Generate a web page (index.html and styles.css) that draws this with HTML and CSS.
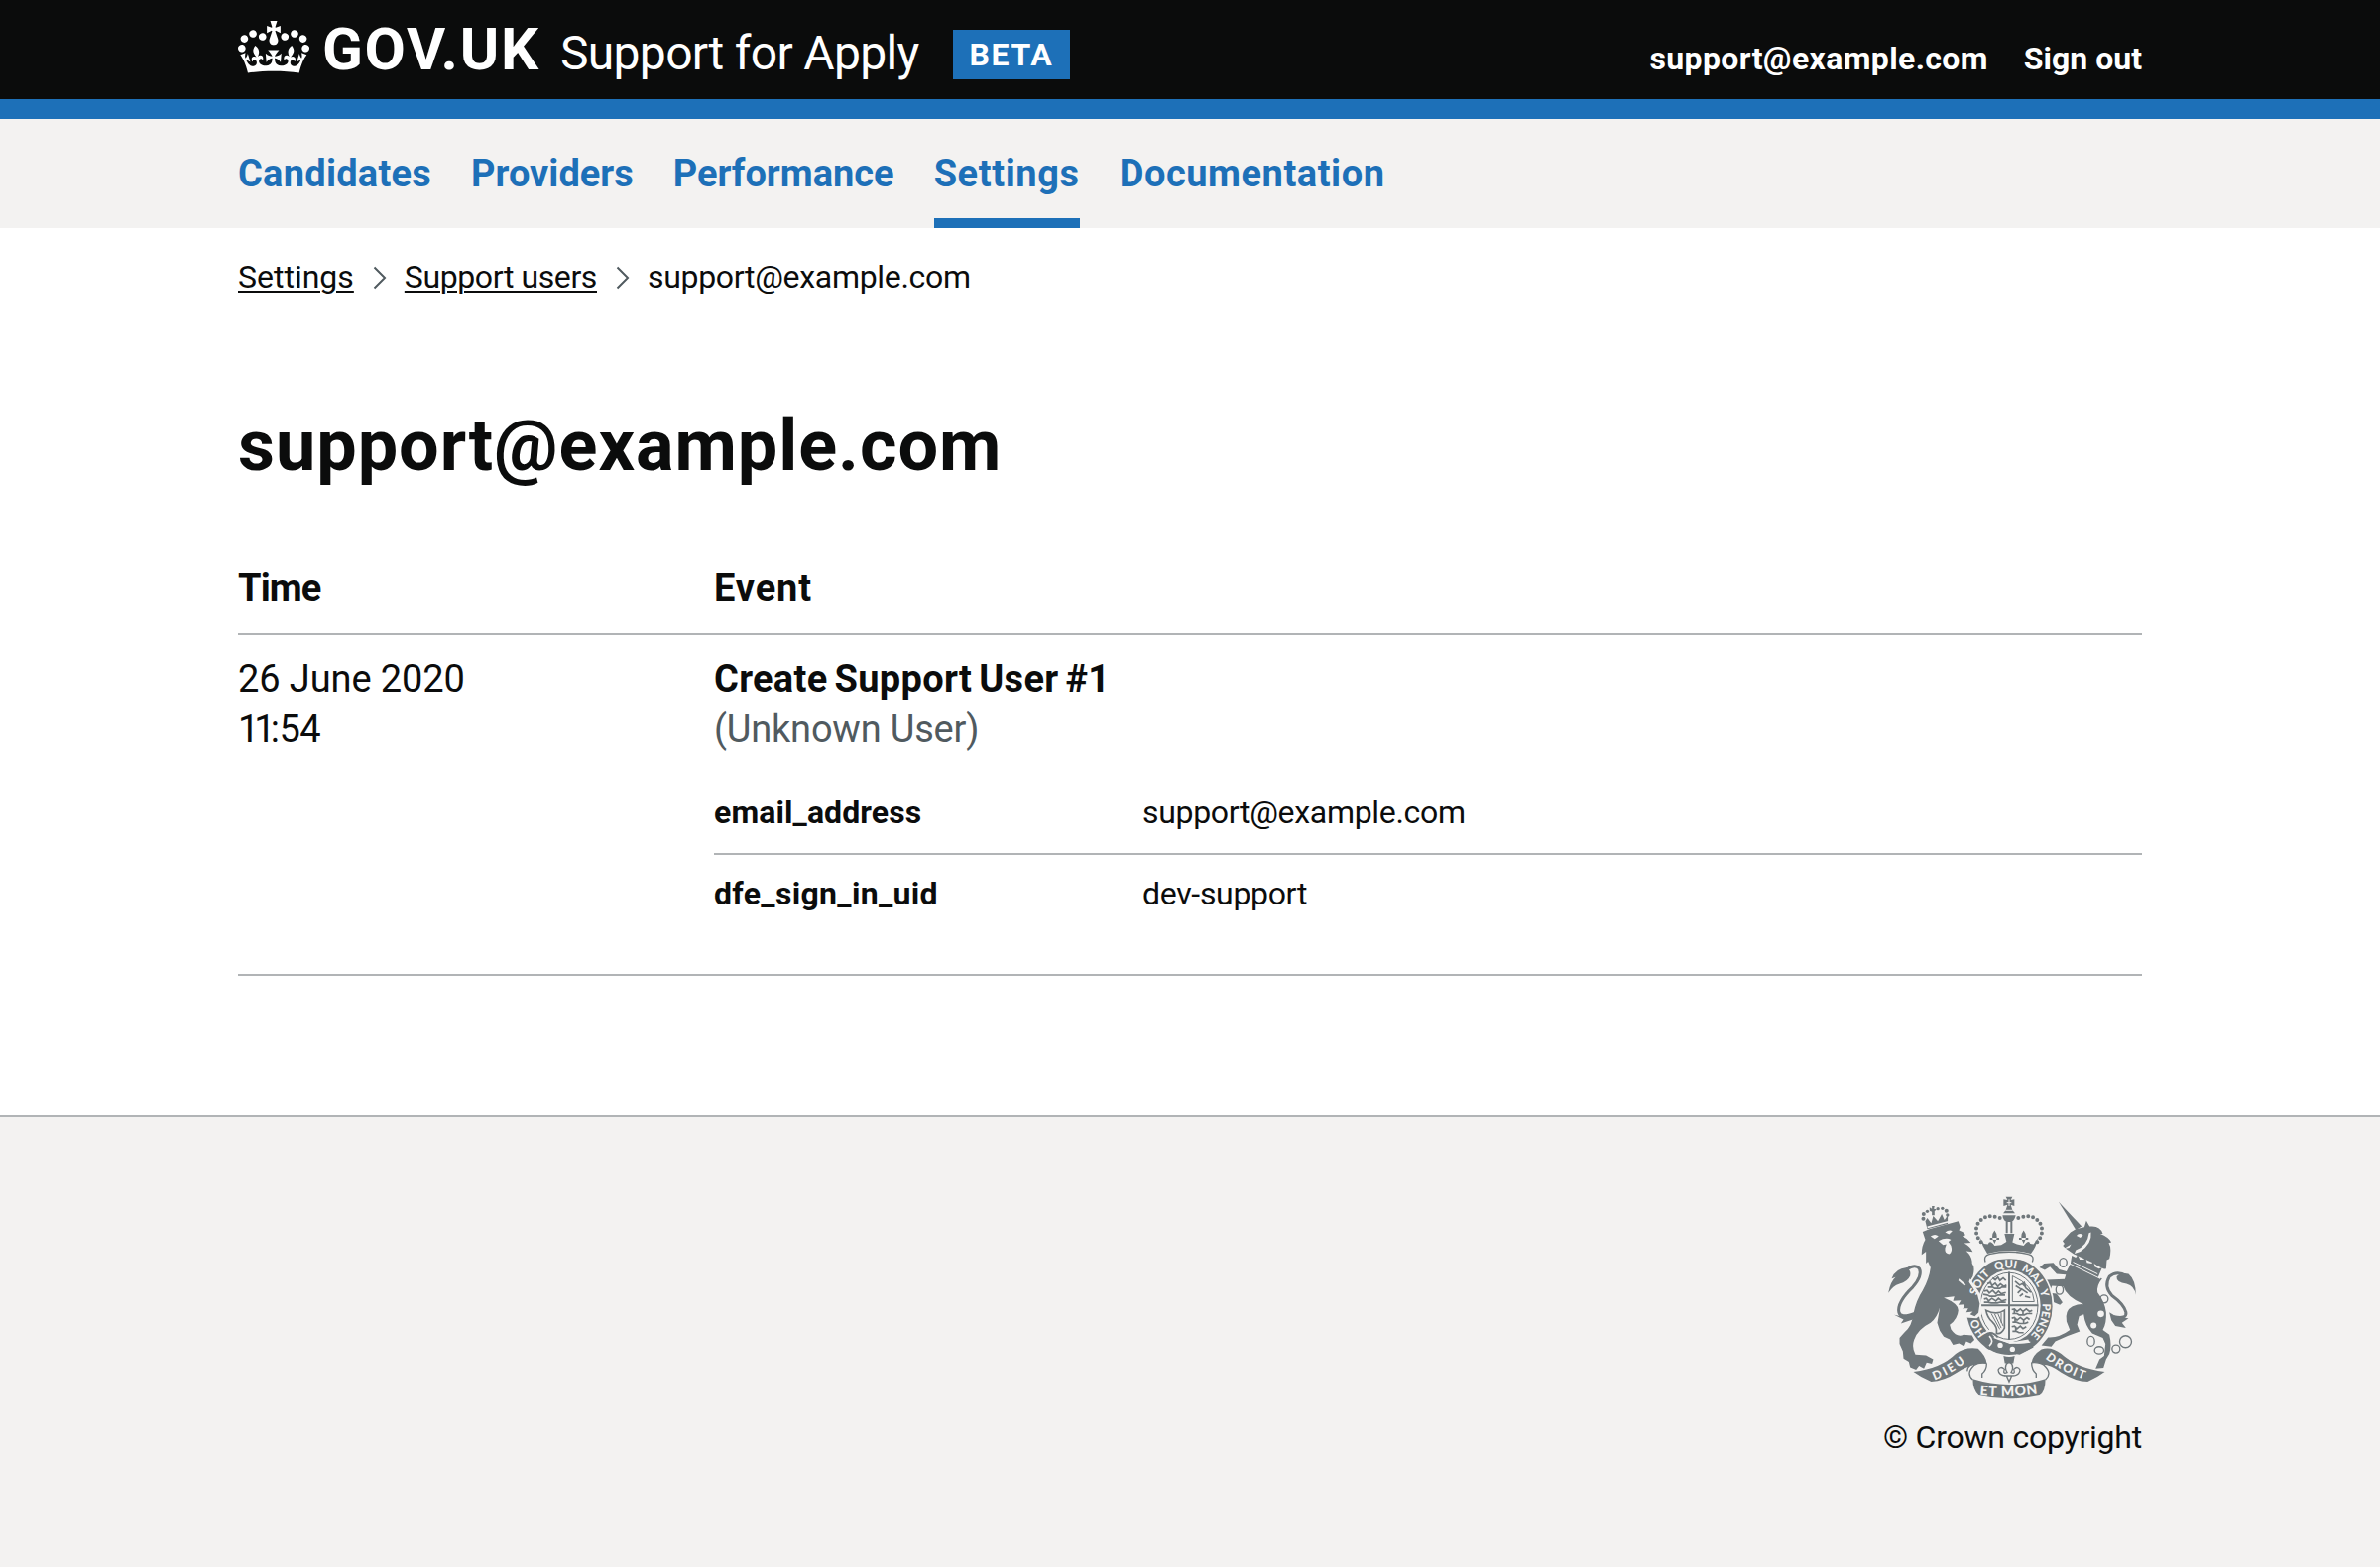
FILE: index.html
```html
<!DOCTYPE html>
<html lang="en">
<head>
<meta charset="utf-8">
<title>support@example.com - Support for Apply - GOV.UK</title>
<link rel="stylesheet" href="styles.css">
</head>
<body>
<header class="header">
  <div class="container header-inner">
    <svg class="crown" viewBox="0 0 132 97" aria-hidden="true"><path fill="#fff" d="M25 30.2c3.5 1.5 7.7-.2 9.1-3.7 1.5-3.6-.2-7.8-3.9-9.2-3.6-1.4-7.6.3-9.1 3.9-1.4 3.5.3 7.5 3.9 9zM9 39.5c3.6 1.5 7.8-.2 9.2-3.7 1.5-3.6-.2-7.8-3.9-9.1-3.6-1.5-7.6.2-9.1 3.8-1.4 3.5.3 7.5 3.8 9zM4.4 57.2c3.5 1.5 7.7-.2 9.1-3.8 1.5-3.6-.2-7.7-3.9-9.1-3.5-1.5-7.6.3-9.1 3.8-1.4 3.5.3 7.6 3.9 9.1zm38.3-21.4c3.5 1.5 7.7-.2 9.1-3.8 1.5-3.6-.2-7.7-3.9-9.1-3.6-1.5-7.6.3-9.1 3.8-1.3 3.6.4 7.7 3.9 9.1zm64.4-5.6c-3.6 1.5-7.8-.2-9.1-3.7-1.5-3.6.2-7.8 3.8-9.2 3.6-1.4 7.7.3 9.2 3.9 1.3 3.5-.4 7.5-3.9 9zm15.9 9.3c-3.6 1.5-7.7-.2-9.1-3.7-1.5-3.6.2-7.8 3.7-9.1 3.6-1.5 7.7.2 9.2 3.8 1.5 3.5-.3 7.5-3.8 9zm4.7 17.7c-3.6 1.5-7.8-.2-9.2-3.8-1.5-3.6.2-7.7 3.9-9.1 3.6-1.5 7.7.3 9.2 3.8 1.3 3.5-.4 7.6-3.9 9.1zM89.3 35.8c-3.6 1.5-7.8-.2-9.2-3.8-1.4-3.6.2-7.7 3.9-9.1 3.6-1.5 7.7.3 9.2 3.8 1.4 3.6-.3 7.7-3.9 9.1zM69.7 17.7l8.9 4.7V9.3l-8.9 2.8c-.2-.3-.5-.6-.9-.9L72.4 0H59.6l3.5 11.2c-.3.3-.6.5-.9.9l-8.8-2.8v13.1l8.8-4.7c.3.3.6.7.9.9l-5 15.4v.1c-.2.8-.4 1.6-.4 2.4 0 4.1 3.1 7.5 7 8.1h.2c.3 0 .7.1 1 .1.4 0 .7 0 1-.1h.2c4-.6 7.1-4.1 7.1-8.1 0-.8-.1-1.7-.4-2.4V34l-5.1-15.4c.4-.2.7-.6 1-.9zM66 92.8c16.9 0 32.8 1.1 47.1 3.2 4-16.9 8.9-26.7 14-33.5l-9.6-3.4c1 4.9 1.1 7.2 0 10.2-1.5-1.4-3-4.3-4.2-8.7L108.6 76c2.8-2 5-3.2 7.5-3.3-4.4 9.4-10 11.9-13.6 11.2-4.3-.8-6.3-4.6-5.6-7.9 1-4.7 5.7-5.9 8-.5 4.3-8.7-3-11.4-7.6-8.8 7.1-7.2 7.9-13.5 2.1-21.1-8 6.1-8.1 12.3-4.5 20.8-4.7-5.4-12.1-2.5-9.5 6.2 3.4-5.2 7.9-2 7.2 3.1-.6 4.3-6.4 7.8-13.5 7.2-10.3-.9-10.9-8-11.2-13.8 2.5-.5 7.1 1.8 11 7.3L80.2 60c-4.1 4.4-8 5.3-12.3 5.4 1.4-4.4 8-11.6 8-11.6H55.5s6.4 7.2 7.9 11.6c-4.2-.1-8-1-12.3-5.4l1.4 16.4c3.9-5.5 8.5-7.7 10.9-7.3-.3 5.8-.9 12.8-11.1 13.8-7.2.6-12.9-2.9-13.5-7.2-.7-5 3.8-8.3 7.1-3.1 2.7-8.7-4.6-11.6-9.4-6.2 3.7-8.5 3.6-14.7-4.6-20.8-5.8 7.6-5 13.9 2.2 21.1-4.7-2.6-11.9.1-7.7 8.8 2.3-5.5 7.1-4.2 8.1.5.7 3.3-1.3 7.1-5.7 7.9-3.5.7-9-1.8-13.5-11.2 2.5.1 4.7 1.3 7.5 3.3l-4.7-15.4c-1.2 4.4-2.7 7.2-4.3 8.7-1.1-3-.9-5.3 0-10.2l-9.5 3.4c5 6.9 9.9 16.7 14 33.5 14.8-2.1 30.8-3.2 47.7-3.2z"/></svg>
    <span class="logotype">GOV.UK</span>
    <span class="product">Support for Apply</span>
    <strong class="tag">BETA</strong>
    <nav class="account">
      <a class="account-email">support@example.com</a>
      <a class="account-out">Sign out</a>
    </nav>
  </div>
</header>
<nav class="primary">
  <div class="container primary-list">
    <a class="primary-link candidates">Candidates</a>
    <a class="primary-link">Providers</a>
    <a class="primary-link">Performance</a>
    <a class="primary-link current">Settings</a>
    <a class="primary-link documentation">Documentation</a>
  </div>
</nav>
<div class="container">
  <nav class="breadcrumbs">
    <a class="crumb">Settings</a>
    <svg class="chevron" viewBox="0 0 14 24"><path d="M1.5 1.5 12 12 1.5 22.5"/></svg>
    <a class="crumb crumb-users">Support users</a>
    <svg class="chevron" viewBox="0 0 14 24"><path d="M1.5 1.5 12 12 1.5 22.5"/></svg>
    <span class="email">support@example.com</span>
  </nav>
  <main>
    <h1 class="title">support@example.com</h1>
    <div class="row head">
      <div class="th-time">Time</div>
      <div class="th-event">Event</div>
    </div>
    <div class="row entry">
      <div class="time"><div class="date">26 June 2020</div><div class="clock"><span class="hour">11</span>:54</div></div>
      <div>
        <div class="event">Create Support User #1</div>
        <div class="user">(Unknown User)</div>
        <dl class="changes">
          <div class="change"><dt class="key-email">email_address</dt><dd class="email">support@example.com</dd></div>
          <div class="change"><dt class="key-uid">dfe_sign_in_uid</dt><dd class="email">dev-support</dd></div>
        </dl>
      </div>
    </div>
  </main>
</div>
<footer class="footer">
  <div class="container footer-inner">
    <svg class="crest" viewBox="72 46 750 616" aria-hidden="true">
      <defs>
        <path id="ho" d="M368 463A101 116 0 0 1 338 398"/>
        <path id="soit" d="M341 348A101 116 0 0 1 403 271"/>
        <path id="qui" d="M398 273A101 116 0 0 1 478 274"/>
        <path id="mal" d="M474 272A101 116 0 0 1 532 338"/>
        <path id="y" d="M530 333A101 116 0 0 1 539 374"/>
        <path id="pense" d="M539 372A101 116 0 0 1 480 484"/>
        <path id="dieu" d="M212 603Q270 582 325 534"/>
        <path id="droit" d="M547 537Q600 582 685 607"/>
        <path id="mon" d="M345 649Q437 660 545 642"/>
      </defs>
      <!-- lion -->
      <g class="ink">
        <path d="M176 154L196 146 284 122 290 140 286 150Q300 154 306 164L296 167Q312 174 322 187L302 189Q320 198 328 215L308 213Q326 228 326 250Q336 262 328 290L318 306 344 345 350 372 346 406 332 414 318 408 326 396 308 400 312 386 298 388 304 374 284 376 292 362 268 364 272 350 240 354Q284 372 284 392 282 418 258 436L262 450Q280 476 300 466L326 468 333 482 322 492 308 486 302 501 286 492 268 497 258 480 240 472 228 454 220 430 228 384Q220 414 200 430 160 450 150 482 142 505 154 526L186 528 208 540 204 554 188 550 180 568 165 560 156 572 138 564 134 548 118 538 116 516 106 494 106 476 120 460Q144 440 148 402 156 362 176 332 196 296 200 262L192 244 186 250 186 214 173 224Q172 198 184 178Z"/>
        <path d="M72 340Q78 306 94 292L82 296Q92 266 128 262 142 272 138 288 130 306 106 312 86 318 72 340Z"/>
        <path class="line" stroke-width="9" d="M128 268Q154 250 166 266 176 288 146 322 98 368 104 398 108 418 152 402"/>
        <path d="M90 406L118 412 156 398 146 420 110 432 118 420Z"/>
        <path d="M184 122L190 146 252 130 252 104 242 118 234 100 222 122 208 106 202 128 190 112Z"/>
        <circle cx="178" cy="114" r="6"/><circle cx="179" cy="100" r="6"/><circle cx="190" cy="92" r="5"/><circle cx="222" cy="84" r="5"/><circle cx="236" cy="83" r="5"/><circle cx="248" cy="90" r="6"/><circle cx="251" cy="103" r="5"/>
        <path d="M197 80L204 84 204 76 212 76 210 84 218 86 212 92 212 104 204 104 204 93 197 90Z"/>
      </g>
      <g class="paper">
        <path d="M190 138L262 119 263 123 191 143Z"/>
        <path d="M200 168Q214 158 224 168L212 176ZM244 156Q256 146 266 152L256 162Z"/>
        <path d="M224 182Q246 170 262 178L254 184 262 196Q268 216 256 222 242 220 244 204L248 192 238 194Z"/>
        <path d="M286 296L342 344 340 350 284 302Z"/>
      </g>
      <!-- unicorn -->
      <g class="ink">
        <path d="M588 63L658 138 640 148Z"/>
        <path d="M640 146L666 140 672 120 682 138Q714 134 722 160L714 160Q740 170 748 186L740 188Q750 204 742 236L734 240 732 266 722 268 692 248 634 222 608 204 601 196 606 190 600 182 624 156Z"/>
        <path d="M624 250L720 296Q702 318 706 338 728 366 732 398 734 430 722 452L742 466Q750 498 742 524L732 540 724 566 700 568 712 540 726 530 730 494 722 476 690 462Q668 438 664 404L650 410 644 436 652 456Q616 468 578 486L566 502 536 498 556 474Q590 476 622 452L612 426Q606 392 630 380 650 372 664 374 612 352 602 320L568 318 560 340 582 342 600 368 592 376 574 368 546 340 540 322 552 300 606 298 610 284 582 282 562 260 546 270 530 262 544 250 572 248 590 268 612 274Z"/>
        <path d="M822 346Q818 318 794 312 762 308 764 290 776 276 800 282 822 300 822 346Z"/>
        <path class="line" stroke-width="9" d="M794 288Q764 270 742 290 724 320 750 348 786 374 792 398 796 420 756 412"/>
        <path d="M742 398L764 412 800 416 780 430 792 446 760 440 748 422Z"/>
      </g>
      <g class="paper">
        <path d="M642 166Q650 156 662 164L654 172ZM686 156Q690 190 654 214L636 220 640 210Q676 196 680 158Z"/>
        <path d="M620 202L602 206 626 192Z"/>
        <path d="M626 220L732 270 714 298 618 250Z"/>
        <circle cx="716" cy="403" r="10"/><circle cx="694" cy="438" r="9"/>
      </g>
      <path class="ink" d="M628 226L640 232 646 224 652 238 664 238 670 232 674 248 688 250 694 244 698 260 710 266 720 262 708 292 624 250Z"/>
      <path class="cut" stroke-width="3" d="M632 246L706 282"/>
      <g class="line ring">
        <ellipse cx="602" cy="247" rx="11" ry="13"/><ellipse cx="591" cy="330" rx="11" ry="14"/><circle cx="726" cy="358" r="12"/><ellipse cx="686" cy="486" rx="11" ry="15"/><ellipse cx="711" cy="513" rx="14" ry="11"/><circle cx="762" cy="509" r="12"/><circle cx="791" cy="487" r="18"/>
      </g>
      <!-- shield and garter -->
      <ellipse class="paper" cx="438" cy="380" rx="136" ry="152"/>
      <ellipse class="ink" cx="438" cy="380" rx="131" ry="147"/>
      <ellipse class="paper" cx="438" cy="379" rx="95" ry="109"/>
      <ellipse class="line" stroke-width="3" cx="438" cy="379" rx="87" ry="101"/>
      <path class="line" stroke-width="6" d="M438 276V482M350 377H526"/>
      <g class="line" stroke-width="5">
        <path d="M388 294l8 6 8-8 6 10 10-8 8 8M372 312l10-4 4 10 10-8 8 10 8-8 10 8 8-4M374 322h14l6 4h16l6-4h14M362 334l10-2 6 8 10-8 10 10 8-8 8 8 14-4M360 344l12 2 8 4h16l8-4h22M362 358l8-2 6 8 10-8 12 8 8-8 10 8 14-4M362 368h12l10 2h18l8-2h18"/>
        <path d="M446 390l8-2 8 8 10-8 8 8 10-8 10 8 8-4M448 402h14l6 4h16l8-4h16M446 416l8-2 8 8 10-8 10 8 10-8 8 6M448 428h12l10 4h16l10-4M446 442l8-2 8 8 10-8 8 8 10-6M448 456h12l8 4h14M454 388v14M480 396v12M456 416v12M482 424v8M458 442v12"/>
        <path d="M456 304l14 12 14-8 4 16 16 14M464 340l12-12 18 12M458 318l16 10M486 350l16 4M478 312l8 8M470 350l10-8"/>
      </g>
      <path class="line" stroke-width="3" d="M448 288V366H514Q512 316 448 288Z"/>
      <path class="line" stroke-width="5" d="M368 392Q400 408 424 392L424 446Q414 466 400 462 404 444 386 426 372 414 368 392Z"/>
      <path class="line" stroke-width="3" d="M384 402L410 450M394 403L414 446M404 402L420 440M414 400V430"/>
      <!-- lion's paw over the garter -->
      <path class="paper" d="M320 296L352 346 356 404 340 416 306 414 300 350Z"/>
      <path class="ink" d="M316 306L342 345 349 372 345 400 334 410 320 404 328 396 308 398 314 386 300 386 300 320Z"/>
      <!-- garter buckle -->
      <path class="paper" d="M356 462L380 450 396 472 440 490 496 480 500 490 440 500Z"/>
      <path class="ink" d="M366 470Q380 508 410 518L470 526 512 504 500 490 440 494 396 476 380 458Z"/>
      <path class="cut" stroke-width="4" d="M392 474Q440 498 502 488"/>
      <path class="line" stroke-width="6" d="M404 474Q386 452 366 466 384 476 368 500 376 512 392 506"/>
      <path class="cut" stroke-width="5" d="M378 470Q394 486 378 500"/>
      <circle class="paper" cx="411" cy="498" r="8"/><circle class="paper" cx="448" cy="510" r="8"/>
      <g class="motto" font-size="34">
        <text><textPath href="#ho">HO</textPath></text>
        <text><textPath href="#soit">SOIT</textPath></text>
        <text><textPath href="#qui">QUI</textPath></text>
        <text><textPath href="#mal">MAL</textPath></text>
        <text><textPath href="#y">Y</textPath></text>
        <text><textPath href="#pense">PENSE</textPath></text>
      </g>
      <!-- royal crown -->
      <path class="paper" d="M362 220Q436 196 514 220L512 248Q438 224 364 248Z"/>
      <path class="line" stroke-width="4" d="M366 246Q360 226 378 222 438 208 496 222 516 226 508 246"/>
      <path class="ink" d="M350 172Q356 196 372 220 438 202 504 220 520 200 526 172L512 192 502 190Q498 176 482 196L462 192 448 186 454 160H424L430 184 414 194 394 196Q380 176 374 192L362 190Z"/>
      <path class="ink" d="M394 150Q380 168 394 190 408 168 394 150ZM482 150Q468 168 482 190 496 168 482 150ZM380 172H408V178H380ZM468 172H496V178H468Z"/>
      <path class="ink" d="M428 48H448L443 58 454 56V76L443 72 448 88 456 98H420L428 88 433 72 421 76V56L433 58Z"/>
      <path class="cut" stroke-width="3" d="M431 66H445M438 56V76M427 89H449"/>
      <path class="ink" d="M418 104H458Q454 120 446 124H430Q420 120 418 104Z"/>
      <path class="line" stroke-width="6" d="M431 124V158M445 124V158"/>
      <path class="line beads" d="M410 112Q362 96 342 132 330 164 358 190M466 112Q514 96 534 132 546 164 518 190"/>
      <!-- ribbons -->
      <path class="ink" d="M148 578Q232 568 276 524 304 502 344 508 368 530 370 552 350 550 336 556 310 560 280 580 240 606 202 608 172 596 148 578Z"/>
      <path class="ink" d="M728 578Q644 568 596 524 566 500 536 510 508 528 506 550 526 548 540 556 564 556 596 580 640 608 676 608 704 596 728 578Z"/>
      <path class="ribbon" d="M370 552Q346 548 332 558 306 582 328 602M312 576Q308 560 342 548M370 552Q370 572 356 584L356 596M506 550Q530 548 544 558 570 582 548 602M506 550Q506 572 520 584L520 596"/>
      <path class="ink" d="M328 600Q438 634 548 600 548 640 530 650 438 670 346 650 328 634 328 600Z"/>
      <text class="motto" font-size="36"><textPath href="#dieu" textLength="108">DIEU</textPath></text>
      <text class="motto" font-size="36"><textPath href="#droit" textLength="134">DROIT</textPath></text>
      <text class="motto" font-size="42"><textPath href="#mon" startOffset="4" textLength="176">ET MON</textPath></text>
      <path class="ink" d="M421 530Q438 536 455 530L451 552H425Z"/>
      <path class="fleur" d="M438 546Q420 560 432 580 418 586 424 570 412 558 405 572 406 590 430 590L438 608 446 590Q470 590 471 572 464 558 452 570 458 586 444 580 456 560 438 546ZM422 590H454"/>
    </svg>
    <a class="copyright">© Crown copyright</a>
  </div>
</footer>
</body>
</html>
```
FILE: styles.css
```css
* { box-sizing: border-box; }
body {
  margin: 0;
  background: #fff;
  color: #0b0c0c;
  font: 32px/40px Roboto, "Liberation Sans", sans-serif;
  min-height: 1580px;
  display: flex;
  flex-direction: column;
}
.container { width: 1920px; margin: 0 auto; }

.header { height: 120px; background: #0b0c0c; border-bottom: 20px solid #1d70b8; color: #fff; }
.header-inner { display: flex; align-items: baseline; padding-top: 20px; }
.crown { align-self: flex-start; width: 72px; height: 53px; margin-top: 1px; flex: none; }
.logotype { font-size: 60px; line-height: 60px; font-weight: 700; margin-left: 13px; width: 240px; letter-spacing: 1.7px; }
.product { font-size: 48px; line-height: 60px; width: 396px; letter-spacing: -0.68px; }
.tag { align-self: flex-start; margin-top: 10px; width: 118px; height: 50px; line-height: 50px; text-align: center; background: #1d70b8; letter-spacing: 1.6px; }
.account { margin-left: auto; display: flex; gap: 36px; font-weight: 700; }
.account-email { letter-spacing: 0.37px; }

.primary { background: #f3f2f1; height: 110px; }
.primary-list { display: flex; gap: 40px; }
.primary-link { color: #1d70b8; font-size: 38px; line-height: 50px; font-weight: 700; padding: 30px 0 20px; }
.candidates { letter-spacing: 0.25px; }
.current { border-bottom: 10px solid #1d70b8; letter-spacing: 0.6px; }
.documentation { letter-spacing: 0.54px; }

.breadcrumbs { display: flex; padding-top: 29px; }
.crumb { text-decoration: underline; text-decoration-thickness: 2px; text-underline-offset: 3px; }
.crumb-users { letter-spacing: -0.4px; }
.email { letter-spacing: -0.32px; }
.chevron { width: 14px; height: 24px; margin: 9px 18px 0 19px; fill: none; stroke: #505a5f; stroke-width: 2; }
.title { margin: 111px 0 58px; font-size: 72px; line-height: 80px; font-weight: 700; letter-spacing: 0.95px; }

.row { display: grid; grid-template-columns: 480px 1fr; font-size: 38px; line-height: 50px; padding-top: 20px; border-bottom: 2px solid #b1b4b6; }
.head { font-weight: 700; padding-bottom: 20px; }
.th-time { letter-spacing: -0.9px; }
.th-event { letter-spacing: 0.9px; }
.entry { padding-bottom: 40px; }
.date { letter-spacing: -0.1px; }
.clock { letter-spacing: -0.5px; }
.hour { letter-spacing: -5px; }
.event { font-weight: 700; letter-spacing: 0.3px; word-spacing: -2.7px; }
.user { color: #505a5f; letter-spacing: -0.2px; }
.changes { margin: 20px 0 0; font-size: 32px; line-height: 40px; }
.change { display: grid; grid-template-columns: 432px 1fr; padding: 19px 0 21px; }
.change + .change { border-top: 2px solid #b1b4b6; }
.change dt { font-weight: 700; }
.change dd { margin: 0; }
.key-email { letter-spacing: 0.1px; }
.key-uid { letter-spacing: 0.33px; }

.footer { margin-top: 140px; flex: 1; background: #f3f2f1; border-top: 2px solid #b1b4b6; }
.footer-inner { display: flex; flex-direction: column; align-items: flex-end; padding-top: 80px; }
.crest { width: 250px; height: 205px; margin-right: 6px; }
.copyright { margin-top: 18px; letter-spacing: -0.23px; }
.ink { fill: #6f777b; }
.paper { fill: #f3f2f1; }
.line, .beads, .ribbon, .fleur { fill: none; stroke: #6f777b; }
.cut { fill: none; stroke: #f3f2f1; }
.ring, .ribbon, .fleur { stroke-width: 4; }
.beads { stroke-width: 12; stroke-linecap: round; stroke-dasharray: 0 15; }
.motto { font-family: Lato, sans-serif; font-weight: 900; fill: #f3f2f1; }
```
